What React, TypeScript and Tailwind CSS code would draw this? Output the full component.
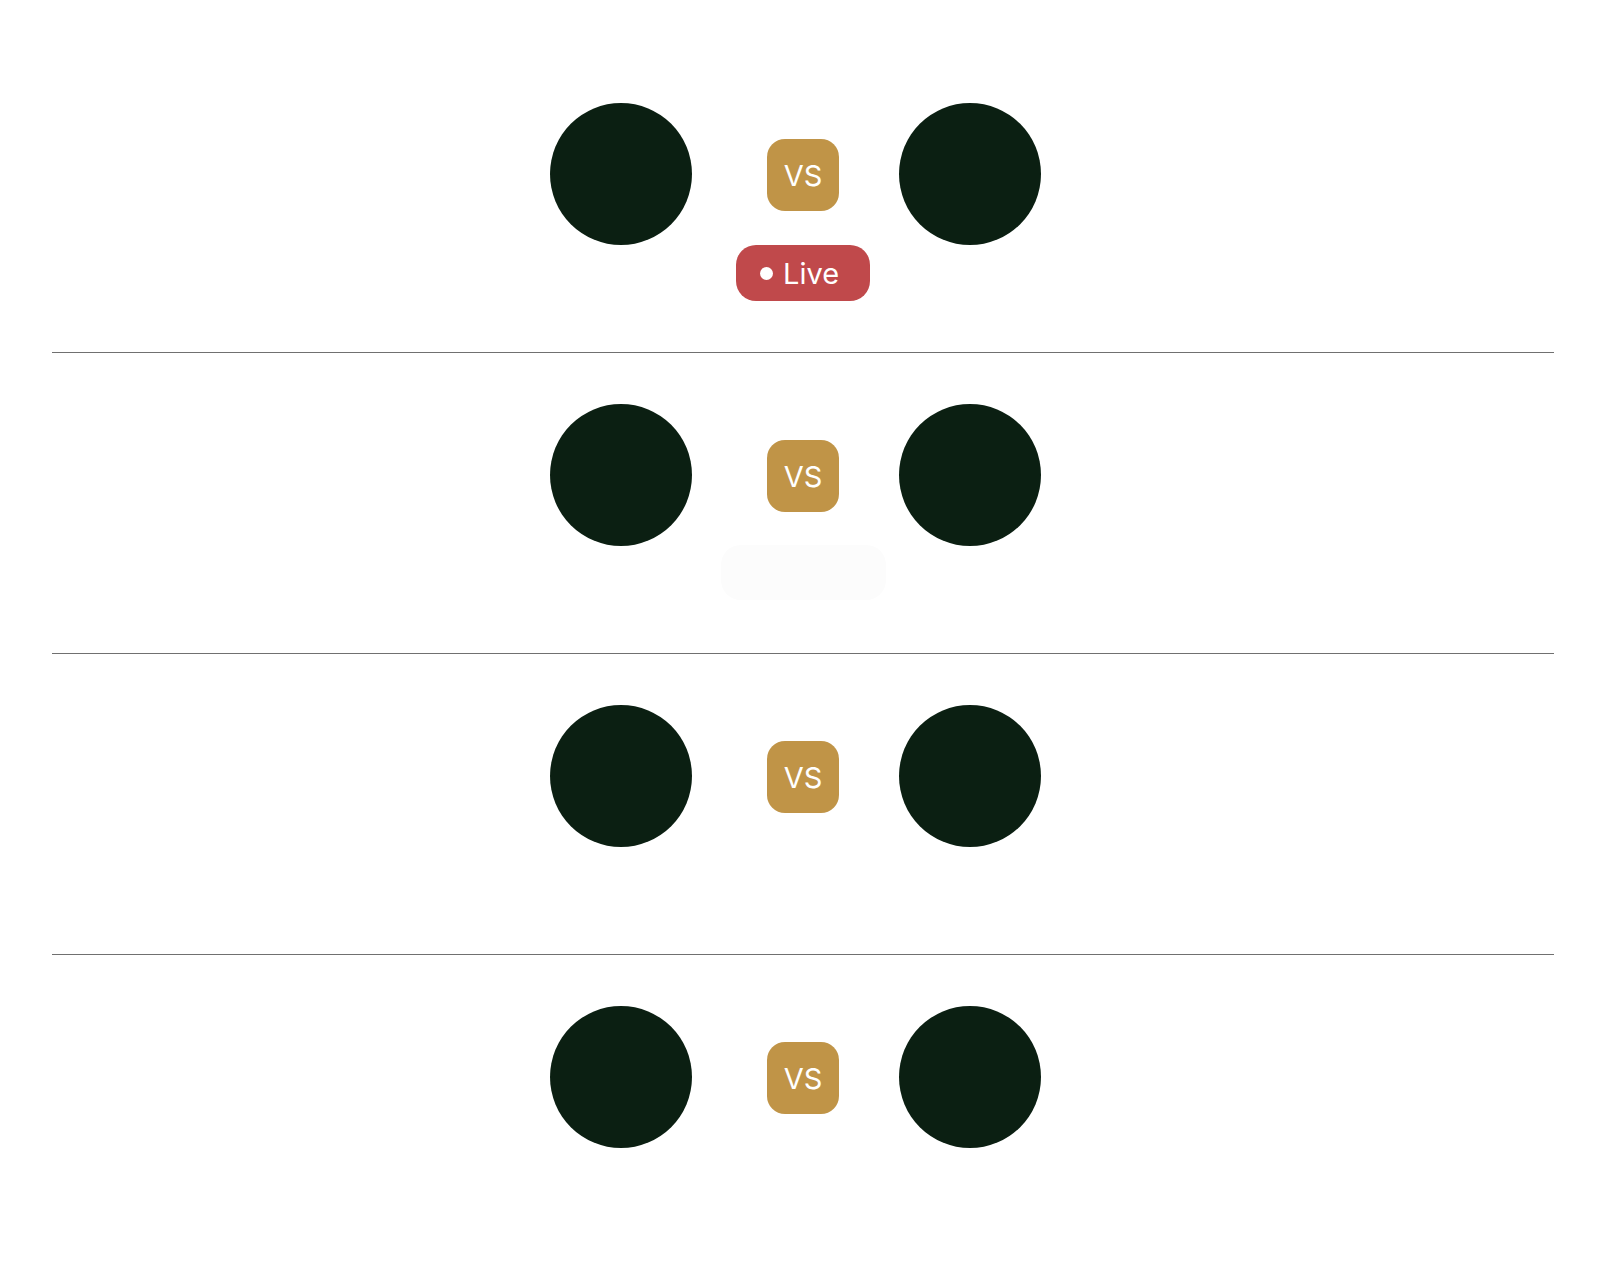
import React from "react";

type Match = { status: "live" | "placeholder" | "none" };

const matches: Match[] = [
  { status: "live" },
  { status: "placeholder" },
  { status: "none" },
  { status: "none" },
];

function Row({ m, last }: { m: Match; last: boolean }) {
  return (
    <div className={last ? "py-[51px]" : "py-[51px] border-b border-[#707070]"}>
      <div className="grid grid-cols-[1fr_166px_1fr] items-start">
        <div className="flex justify-end pr-[28px]">
          <div className="w-[142px] h-[142px] rounded-full bg-[#0b1f12]" />
        </div>
        <div className="flex flex-col items-center h-[198px]">
          <div className="mt-[36px] w-[72px] h-[72px] rounded-[18px] bg-[#c09447] flex items-center justify-center text-white text-[29px] leading-none font-normal">
            VS
          </div>
          {m.status === "live" && (
            <div className="mt-[34px] h-[56px] w-[134px] pl-6 rounded-[20px] bg-[#c0494b] flex items-center gap-[10px] text-white text-[29px] leading-none">
              <span className="w-[13px] h-[13px] rounded-full bg-white shrink-0" />
              <span>Live</span>
            </div>
          )}
          {m.status === "placeholder" && (
            <div className="mt-[33px] h-[55px] w-[165px] rounded-[20px] bg-[#fcfcfc]" />
          )}
        </div>
        <div className="flex justify-start pl-[13px]">
          <div className="w-[142px] h-[142px] rounded-full bg-[#0b1f12]" />
        </div>
      </div>
    </div>
  );
}

export default function App() {
  return (
    <div
      className="min-h-screen bg-white pt-[52px] px-[52px]"
      style={{ fontFamily: "Inter, 'Noto Sans', sans-serif" }}
    >
      {matches.map((m, i) => (
        <Row key={i} m={m} last={i === matches.length - 1} />
      ))}
    </div>
  );
}
